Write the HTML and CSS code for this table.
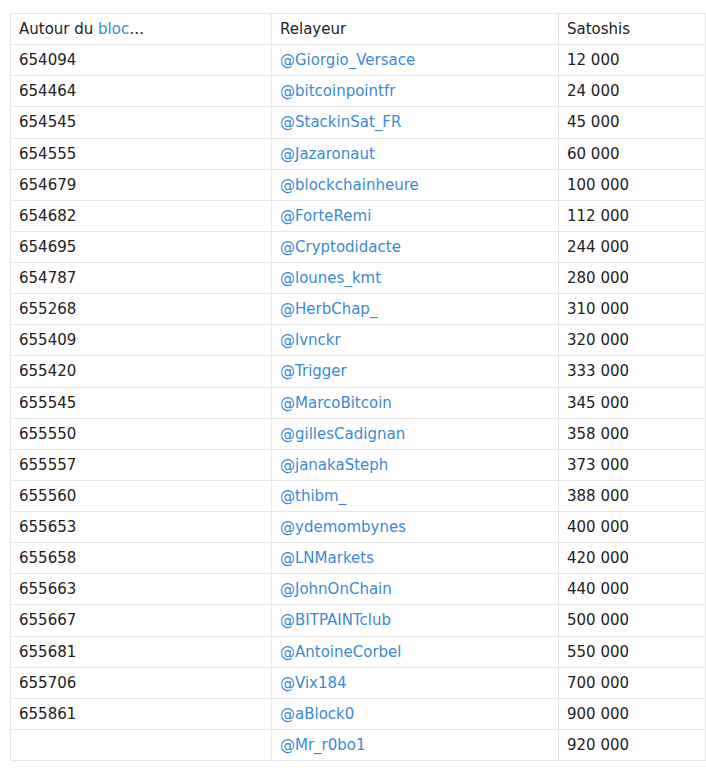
FILE: index.html
```html
<!DOCTYPE html>
<html lang="fr">
<head>
<meta charset="utf-8">
<title>Relayeurs</title>
<link rel="stylesheet" href="styles.css">
</head>
<body>
<table class="relay">
<colgroup><col class="c1"><col class="c2"><col class="c3"></colgroup>
<thead>
<tr><th>Autour du <a href="#">bloc</a>…</th><th>Relayeur</th><th>Satoshis</th></tr>
</thead>
<tbody>
<tr><td>654094</td><td><a href="#">@Giorgio_Versace</a></td><td>12 000</td></tr>
<tr><td>654464</td><td><a href="#">@bitcoinpointfr</a></td><td>24 000</td></tr>
<tr><td>654545</td><td><a href="#">@StackinSat_FR</a></td><td>45 000</td></tr>
<tr><td>654555</td><td><a href="#">@Jazaronaut</a></td><td>60 000</td></tr>
<tr><td>654679</td><td><a href="#">@blockchainheure</a></td><td>100 000</td></tr>
<tr><td>654682</td><td><a href="#">@ForteRemi</a></td><td>112 000</td></tr>
<tr><td>654695</td><td><a href="#">@Cryptodidacte</a></td><td>244 000</td></tr>
<tr><td>654787</td><td><a href="#">@lounes_kmt</a></td><td>280 000</td></tr>
<tr><td>655268</td><td><a href="#">@HerbChap_</a></td><td>310 000</td></tr>
<tr><td>655409</td><td><a href="#">@lvnckr</a></td><td>320 000</td></tr>
<tr><td>655420</td><td><a href="#">@Trigger</a></td><td>333 000</td></tr>
<tr><td>655545</td><td><a href="#">@MarcoBitcoin</a></td><td>345 000</td></tr>
<tr><td>655550</td><td><a href="#">@gillesCadignan</a></td><td>358 000</td></tr>
<tr><td>655557</td><td><a href="#">@janakaSteph</a></td><td>373 000</td></tr>
<tr><td>655560</td><td><a href="#">@thibm_</a></td><td>388 000</td></tr>
<tr><td>655653</td><td><a href="#">@ydemombynes</a></td><td>400 000</td></tr>
<tr><td>655658</td><td><a href="#">@LNMarkets</a></td><td>420 000</td></tr>
<tr><td>655663</td><td><a href="#">@JohnOnChain</a></td><td>440 000</td></tr>
<tr><td>655667</td><td><a href="#">@BITPAINTclub</a></td><td>500 000</td></tr>
<tr><td>655681</td><td><a href="#">@AntoineCorbel</a></td><td>550 000</td></tr>
<tr><td>655706</td><td><a href="#">@Vix184</a></td><td>700 000</td></tr>
<tr><td>655861</td><td><a href="#">@aBlock0</a></td><td>900 000</td></tr>
<tr><td></td><td><a href="#">@Mr_r0bo1</a></td><td>920 000</td></tr>
</tbody>
</table>
</body>
</html>
```
FILE: styles.css
```css
html, body {
  margin: 0;
  padding: 0;
  background: #ffffff;
}
body {
  font-family: "DejaVu Sans", sans-serif;
  font-size: 15px;
  color: #222222;
}
.relay {
  margin: 13px 0 0 10px;
  width: 695px;
  border-collapse: collapse;
  table-layout: fixed;
}
.c1 { width: 261px; }
.c2 { width: 287px; }
.c3 { width: 147px; }
.relay th,
.relay td {
  border: 1px solid #e6e6e6;
  padding: 4px 8px;
  line-height: 22.12px;
  text-align: left;
  font-weight: normal;
  white-space: nowrap;
}
.relay a {
  color: #3a8ad6;
  text-decoration: none;
}
```
